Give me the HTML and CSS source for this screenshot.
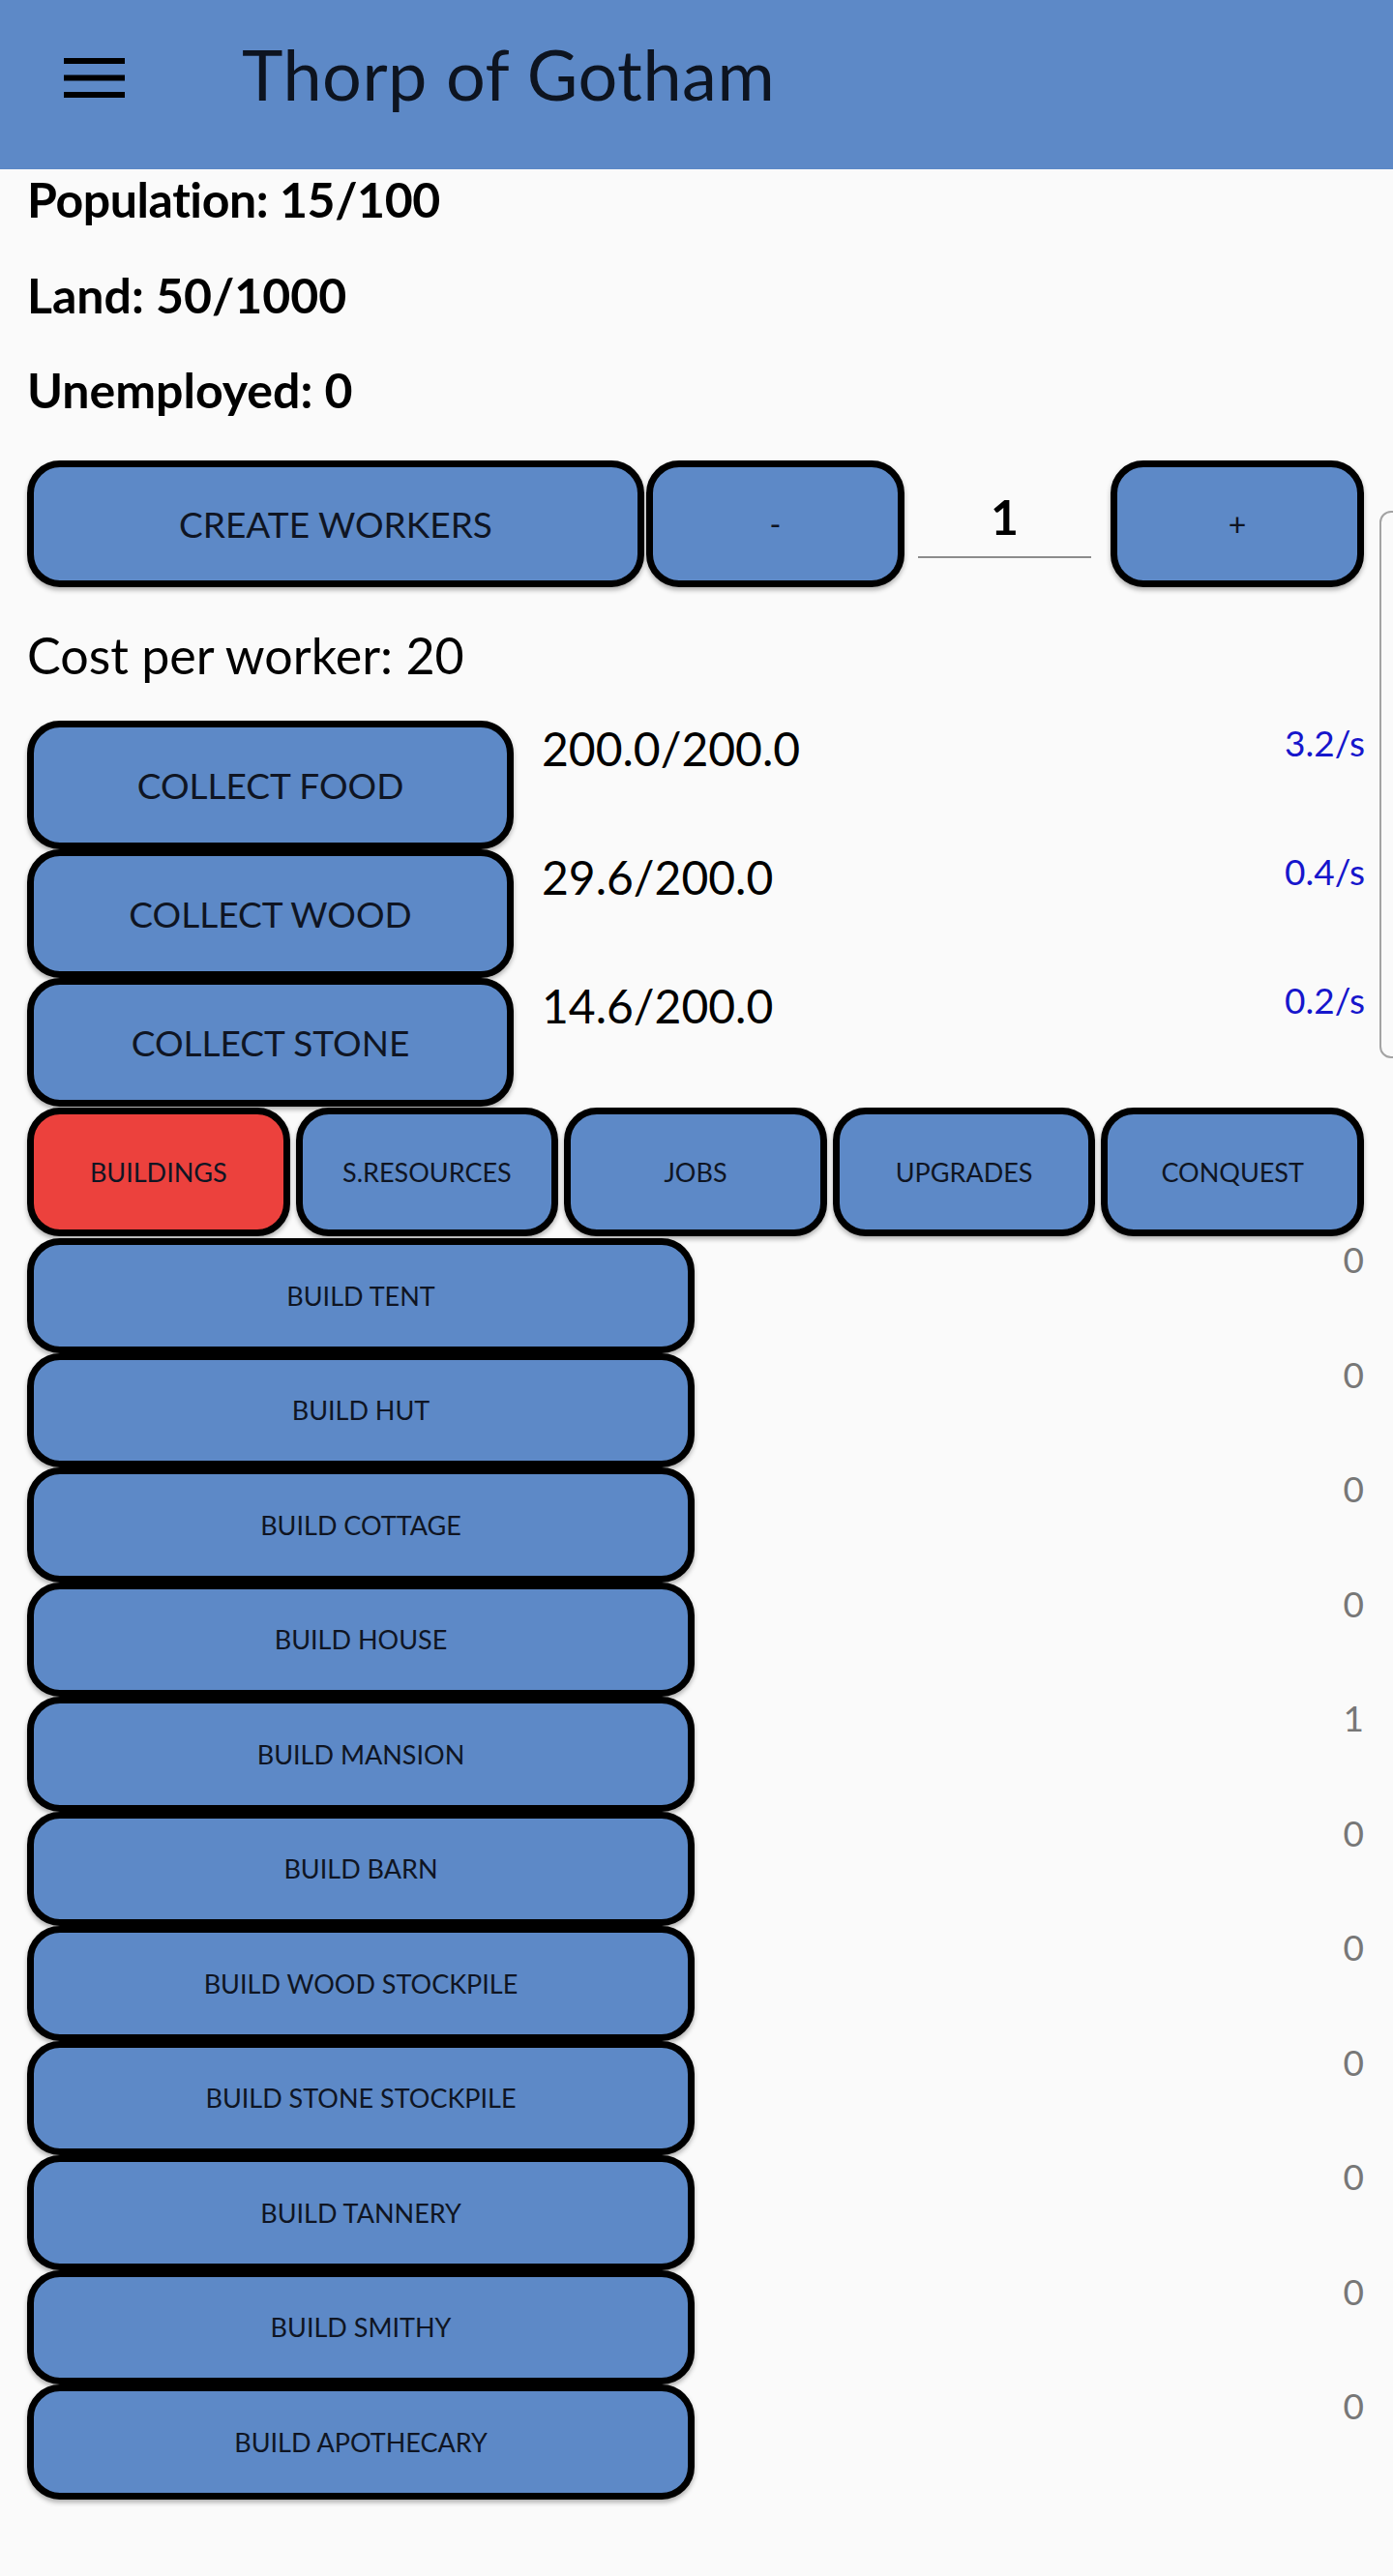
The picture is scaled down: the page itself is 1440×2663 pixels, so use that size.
FILE: index.html
```html
<!DOCTYPE html>
<html lang="en">
<head>
<meta charset="utf-8">
<title>Thorp of Gotham</title>
<link rel="stylesheet" href="styles.css">
</head>
<body>
<header class="appbar">
  <button class="menu" aria-label="Menu">
    <svg width="63" height="41" viewBox="0 0 63 41"><rect x="0" y="0" width="63" height="6"/><rect x="0" y="17.5" width="63" height="6"/><rect x="0" y="35" width="63" height="6"/></svg>
  </button>
  <h1 class="title">Thorp of Gotham</h1>
</header>
<main class="content">
  <div class="stats">
    <p class="stat stat-pop">Population: 15/100</p>
    <p class="stat">Land: 50/1000</p>
    <p class="stat">Unemployed: 0</p>
  </div>
  <div class="workers">
    <button class="btn btn-create">CREATE WORKERS</button>
    <button class="btn btn-step">-</button>
    <div class="qty">1</div>
    <button class="btn btn-step btn-plus">+</button>
  </div>
  <p class="cost">Cost per worker: 20</p>
  <div class="resources">
    <div class="res-row"><button class="btn btn-collect">COLLECT FOOD</button><span class="res-amount">200.0/200.0</span><span class="res-rate">3.2/s</span></div>
    <div class="res-row"><button class="btn btn-collect">COLLECT WOOD</button><span class="res-amount">29.6/200.0</span><span class="res-rate">0.4/s</span></div>
    <div class="res-row"><button class="btn btn-collect">COLLECT STONE</button><span class="res-amount">14.6/200.0</span><span class="res-rate">0.2/s</span></div>
  </div>
  <nav class="tabs">
    <button class="btn tab tab-active">BUILDINGS</button>
    <button class="btn tab">S.RESOURCES</button>
    <button class="btn tab">JOBS</button>
    <button class="btn tab">UPGRADES</button>
    <button class="btn tab">CONQUEST</button>
  </nav>
  <div class="buildings">
    <div class="build-row"><button class="btn btn-build">BUILD TENT</button><span class="count">0</span></div>
    <div class="build-row"><button class="btn btn-build">BUILD HUT</button><span class="count">0</span></div>
    <div class="build-row"><button class="btn btn-build">BUILD COTTAGE</button><span class="count">0</span></div>
    <div class="build-row"><button class="btn btn-build">BUILD HOUSE</button><span class="count">0</span></div>
    <div class="build-row"><button class="btn btn-build">BUILD MANSION</button><span class="count">1</span></div>
    <div class="build-row"><button class="btn btn-build">BUILD BARN</button><span class="count">0</span></div>
    <div class="build-row"><button class="btn btn-build">BUILD WOOD STOCKPILE</button><span class="count">0</span></div>
    <div class="build-row"><button class="btn btn-build">BUILD STONE STOCKPILE</button><span class="count">0</span></div>
    <div class="build-row"><button class="btn btn-build">BUILD TANNERY</button><span class="count">0</span></div>
    <div class="build-row"><button class="btn btn-build">BUILD SMITHY</button><span class="count">0</span></div>
    <div class="build-row"><button class="btn btn-build">BUILD APOTHECARY</button><span class="count">0</span></div>
  </div>
</main>
<div class="edge-handle"></div>
</body>
</html>
```

FILE: styles.css
```css
html, body {
  margin: 0;
  padding: 0;
}

body {
  background: #fafafa;
  font-family: Lato, "Open Sans", sans-serif;
  color: #000;
  position: relative;
  min-height: 2663px;
}

.appbar {
  height: 175px;
  background: #5d89c7;
  display: flex;
  align-items: flex-start;
}

.menu {
  margin: 60px 0 0 66px;
  padding: 0;
  border: 0;
  background: none;
  width: 63px;
  height: 41px;
  display: block;
}

.menu svg {
  display: block;
  fill: #000;
}

.title {
  margin: 33px 0 0 121px;
  font-size: 72px;
  font-weight: 400;
  line-height: 86px;
  color: #0d1420;
  letter-spacing: 0.5px;
}

.content {
  padding: 1px 30px 0 28px;
}

.stats {
  display: flex;
  flex-direction: column;
  gap: 38.5px;
}

.stat {
  margin: 0;
  font-size: 50px;
  font-weight: 700;
  line-height: 60px;
}

.stat-pop {
  letter-spacing: -0.4px;
}

.btn {
  box-sizing: border-box;
  margin: 0;
  padding: 0;
  font-family: inherit;
  background: #5d89c7;
  color: #0f1523;
  border: 7px solid #000;
  border-radius: 34px;
  box-shadow: 0 3px 5px rgba(0, 0, 0, 0.3);
  text-align: center;
  font-weight: 400;
}

.workers {
  display: flex;
  align-items: flex-start;
  margin-top: 43px;
  height: 131px;
}

.btn-create {
  width: 638px;
  height: 131px;
  font-size: 37px;
  margin-right: 2px;
}

.btn-step {
  width: 267px;
  height: 131px;
  font-size: 32px;
}

.btn-plus {
  width: 262px;
}

.qty {
  box-sizing: border-box;
  width: 179px;
  margin: 0 20px 0 14px;
  padding-top: 28px;
  height: 101px;
  font-size: 50px;
  font-weight: 700;
  line-height: 60px;
  text-align: center;
  border-bottom: 2px solid #8c8c8c;
}

.cost {
  margin: 40px 0 0;
  font-size: 52px;
  font-weight: 400;
  line-height: 61px;
}

.resources {
  margin-top: 37px;
}

.res-row {
  display: flex;
  align-items: flex-start;
  height: 133px;
}

.btn-collect {
  width: 503px;
  height: 133px;
  font-size: 37px;
  flex: none;
}

.res-amount {
  margin-left: 29px;
  font-size: 48px;
  line-height: 58px;
}

.res-rate {
  margin-left: auto;
  margin-right: -1px;
  padding-top: 1px;
  font-size: 37px;
  line-height: 44px;
  color: #1616cc;
}

.tabs {
  display: grid;
  grid-template-columns: repeat(5, 1fr);
  gap: 6px;
  margin-top: 1px;
  height: 133px;
}

.tab {
  height: 133px;
  font-size: 27px;
}

.tab-active {
  background: #ec413d;
}

.buildings {
  margin-top: 2px;
}

.build-row {
  display: flex;
  align-items: flex-start;
  height: 118.5px;
}

.btn-build {
  width: 690px;
  height: 118.5px;
  font-size: 27px;
  flex: none;
}

.count {
  margin-left: auto;
  font-size: 37px;
  line-height: 44px;
  color: #777;
}

.edge-handle {
  position: absolute;
  left: 1426px;
  top: 528px;
  width: 40px;
  height: 566px;
  box-sizing: border-box;
  border: 2px solid #a3a3a3;
  border-radius: 12px;
}
```
